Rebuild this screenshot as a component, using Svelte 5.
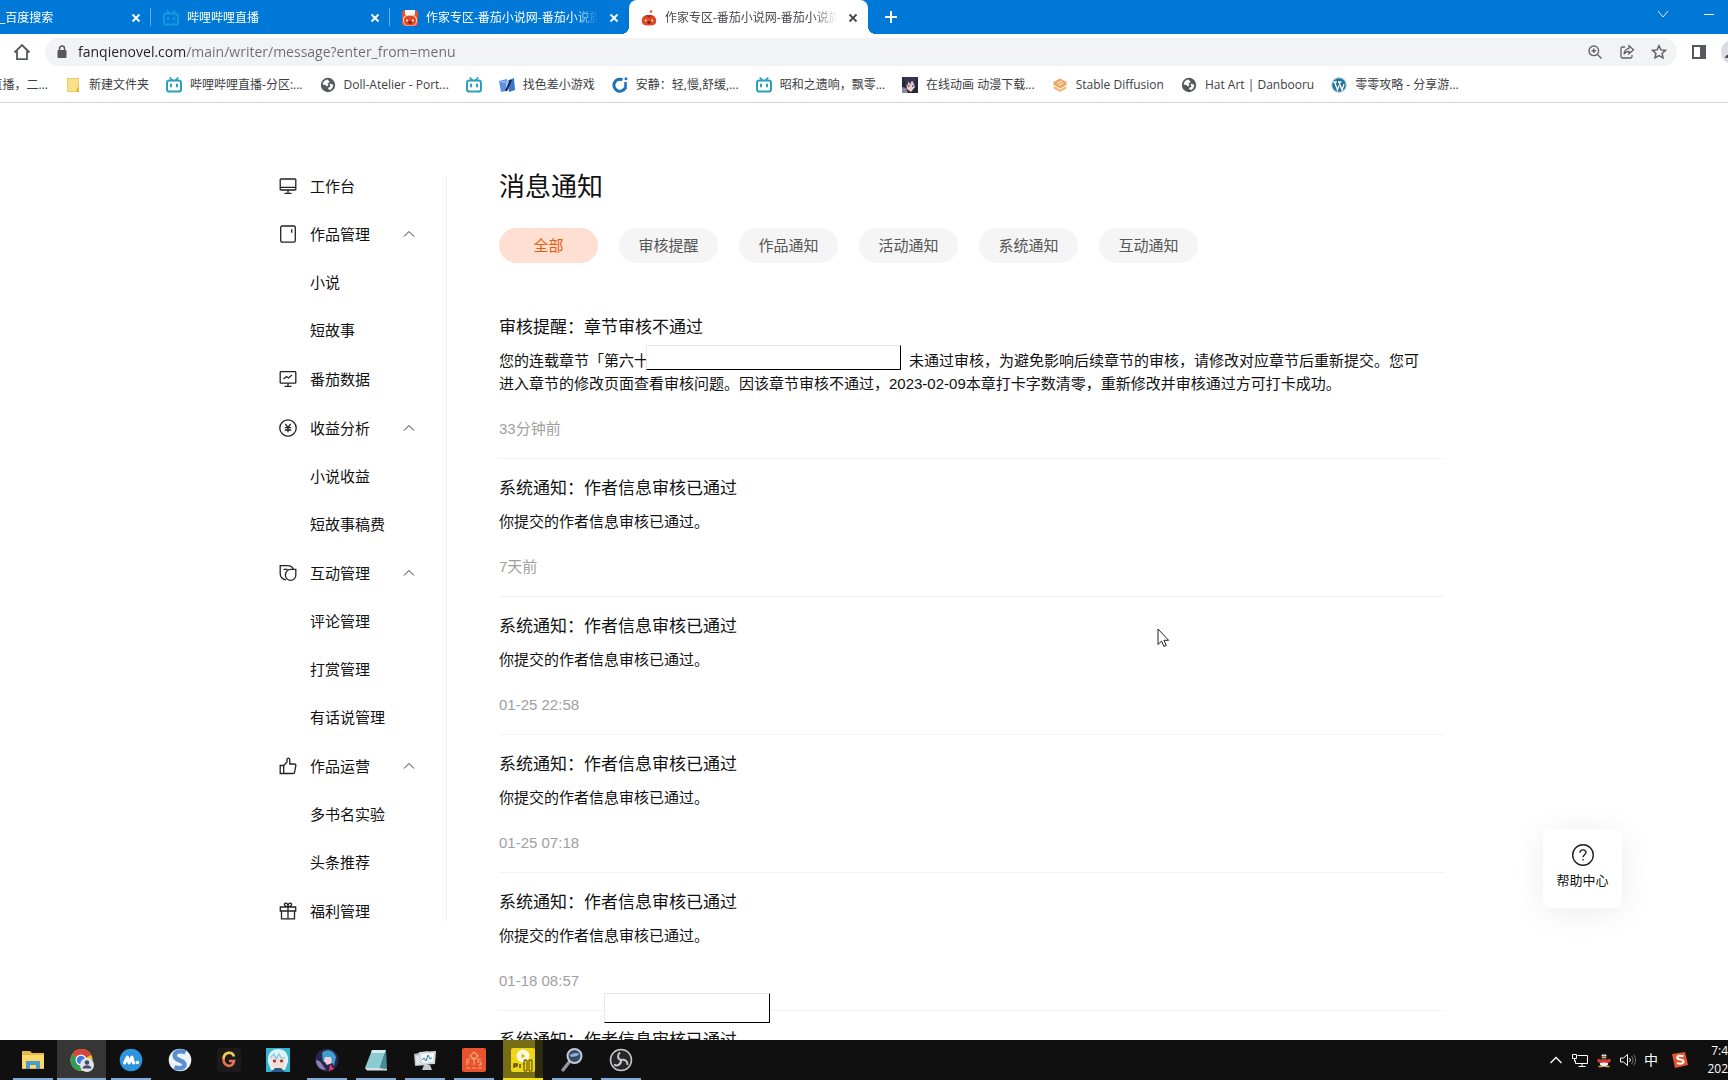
<script>
  const tabs = [
    { title: '_百度搜索', first: true },
    { title: '哔哩哔哩直播', icon: 'bili' },
    { title: '作家专区-番茄小说网-番茄小说旗', icon: 'tomatoBox' },
    { title: '作家专区-番茄小说网-番茄小说旗', icon: 'tomato', active: true }
  ];

  const bookmarks = [
    { title: '直播，二...', cut: true },
    { title: '新建文件夹', icon: 'folder' },
    { title: '哔哩哔哩直播-分区:...', icon: 'bili' },
    { title: 'Doll-Atelier - Port...', icon: 'globe' },
    { title: '', icon: 'bili' },
    { title: '找色差小游戏', icon: 'game' },
    { title: '安静：轻,慢,舒缓,...', icon: 'ring' },
    { title: '昭和之遗响，飘零...', icon: 'bili' },
    { title: '在线动画 动漫下载...', icon: 'anime' },
    { title: 'Stable Diffusion', icon: 'layers' },
    { title: 'Hat Art | Danbooru', icon: 'globe' },
    { title: '零零攻略 - 分享游...', icon: 'wordpress' }
  ];

  const menu = [
    { title: '工作台', icon: 'desk' },
    { title: '作品管理', icon: 'book', children: ['小说', '短故事'] },
    { title: '番茄数据', icon: 'chart' },
    { title: '收益分析', icon: 'yen', children: ['小说收益', '短故事稿费'] },
    { title: '互动管理', icon: 'chat', children: ['评论管理', '打赏管理', '有话说管理'] },
    { title: '作品运营', icon: 'thumb', children: ['多书名实验', '头条推荐'] },
    { title: '福利管理', icon: 'gift' }
  ];

  const filters = ['全部', '审核提醒', '作品通知', '活动通知', '系统通知', '互动通知'];
  let current = $state('全部');

  const passed = { title: '系统通知：作者信息审核已通过', text: '你提交的作者信息审核已通过。' };
  const messages = [
    { ...passed, time: '7天前' },
    { ...passed, time: '01-25 22:58' },
    { ...passed, time: '01-25 07:18' },
    { ...passed, time: '01-18 08:57' },
    { title: passed.title }
  ];

  const apps = [
    { name: 'explorer', open: true },
    { name: 'chrome', open: true, focus: true },
    { name: 'maxthon', open: true },
    { name: 'sogou' },
    { name: 'g' },
    { name: 'girl' },
    { name: 'blue', open: true },
    { name: 'notepad', open: true },
    { name: 'monitor', open: true },
    { name: 'fts', open: true },
    { name: 'potplayer', open: true, alert: true },
    { name: 'magnifier', open: true },
    { name: 'obs', open: true }
  ];
</script>

{#snippet favicon(name)}
  <svg class="fav" viewBox="0 0 16 16" width="16" height="16" aria-hidden="true">
    {#if name === 'bili'}
      <path d="M4.3 1l2 2.4M11.7 1l-2 2.4" fill="none" stroke="currentColor" stroke-width="1.7" stroke-linecap="round" />
      <rect x="1" y="3.6" width="14" height="11" rx="2.4" fill="none" stroke="currentColor" stroke-width="2" />
      <path d="M5 7.6v2M11 7.6v2" stroke="currentColor" stroke-width="2" stroke-linecap="round" />
    {:else if name === 'tomatoBox'}
      <rect width="16" height="16" rx="3" fill="#e9542e" />
      <path d="M3 0h10v4.500L8 6 3 4.500z" fill="#fff" />
      <path d="M1 10c0-4 3-5.500 7-5.500s7 1.500 7 5.500c0 5-3 6-7 6s-7-1-7-6z" fill="#f9d9cc" />
      <path d="M2 10.500C2 7 4 5.800 8 5.800s6 1.200 6 4.700c0 4-2 5-6 5s-6-1-6-5z" fill="#df4a25" />
      <circle cx="5" cy="10.500" r="1" fill="#fff" /><circle cx="11" cy="10.500" r="1" fill="#fff" />
      <ellipse cx="8" cy="12.500" rx="1.700" ry="1.300" fill="#7d1c10" />
    {:else if name === 'tomato'}
      <path d="M8 5.200C12.800 4.600 15.500 7.500 15.200 11.300C15 14.500 13.200 15.600 8 15.600S1 14.500.8 11.300C.5 7.500 3.200 4.600 8 5.200z" fill="#df4a25" />
      <path d="M4 6.500l3-1.800 1 1 1-1 3 1.800-2.500.1L8 8 6.500 6.600z" fill="#a62a17" />
      <circle cx="10" cy="1.500" r="1.200" fill="#df4a25" />
      <circle cx="4.800" cy="10.500" r=".9" fill="#fff" /><circle cx="11.200" cy="10.500" r=".9" fill="#fff" />
      <ellipse cx="8" cy="12.500" rx="1.700" ry="1.300" fill="#7d1c10" />
    {:else if name === 'folder'}
      <path d="M2 1h12v14H2z" fill="#fbe08a" /><path d="M2.500 1.500h11v13h-11z" fill="none" stroke="#eecb60" /><path d="M12 10.500h2V15h-3z" fill="#e2b944" />
    {:else if name === 'globe'}
      <circle cx="8" cy="8" r="7.200" fill="#55585c" />
      <path d="M7.500 2.600C5 3 3 4.800 2.600 7.400l2.600.5 1.600 1.500L8.500 8 7.400 6.600 9.800 5zM9.500 6.500l3.800 1.200c0 2.600-1.600 4.700-4 5.400l-1.600-2 2.700-1.400z" fill="#fff" />
    {:else if name === 'game'}
      <path d="M0 4l8-2-1 12-5 1z" fill="#5d8fe4" /><path d="M8 4l7-3 1 12-6 2z" fill="#3c73cc" />
      <path d="M12 3L7 14" stroke="#17223c" stroke-width="2" /><path d="M2 4.500l8 1" stroke="#9fc0f4" stroke-width="1.500" />
    {:else if name === 'ring'}
      <path d="M10.500 2.800A6 6 0 1 0 13.200 11" fill="none" stroke="#1d74b8" stroke-width="3" /><path d="M13.500 5v7" stroke="#1d74b8" stroke-width="2.600" /><circle cx="14" cy="1.700" r="1.500" fill="#1d74b8" />
    {:else if name === 'anime'}
      <path d="M0 0h16v16H0z" fill="#28263f" /><path d="M4 5l7-1 2 6-4 5-4-3z" fill="#e9cfc6" /><path d="M1 0l4 9 2-5 1 4 2-5 3 6 2-9z" fill="#363455" />
      <path d="M0 10l4 1 2 5H0z" fill="#8d8a9c" /><path d="M6 9h1.500M10 9h1.500" stroke="#4b4399" stroke-width="1.500" />
    {:else if name === 'layers'}
      <path d="M1.500 5L8 1.500 14.500 5v3L8 11.500 1.500 8z" fill="#eda75c" /><path d="M1.500 9L8 12.500 14.500 9v2.500L8 15l-6.500-3.500z" fill="#f1b878" /><path d="M5 6.500l5-2.500M6.500 8.500l5-2.500" stroke="#fff" />
    {:else if name === 'wordpress'}
      <circle cx="8" cy="8" r="7.800" fill="#a9cfe0" /><circle cx="8" cy="8" r="6.700" fill="#21759b" />
      <path d="M2.400 5h3.400M3.500 5l3 8L8 8.500M7 5h3.400M8 5l3 8 2-6" fill="none" stroke="#fff" stroke-width="1.300" />
    {/if}
  </svg>
{/snippet}

{#snippet menuIcon(name)}
  <svg class="menu-icon" viewBox="0 0 18 18" width="18" height="18" aria-hidden="true">
    {#if name === 'desk'}
      <path d="M2 2h14a.8.8 0 0 1 .8.8v9.400a.8.8 0 0 1-.8.8H2a.8.8 0 0 1-.8-.8V2.800A.8.8 0 0 1 2 2zM1.200 10.300h15.600M9 13v3M5.500 16.300h7" />
    {:else if name === 'book'}
      <rect x="1.700" y="1" width="14.600" height="16.200" rx="1.600" /><path d="M12.700 4.300v3.500" />
    {:else if name === 'chart'}
      <rect x="1.200" y="1.600" width="15.600" height="11.600" rx=".8" /><path d="M9 13.200v3M5.500 16.300h7M4.500 9l3-2.500 2 1.500 3.500-3" />
    {:else if name === 'yen'}
      <circle cx="9" cy="9" r="8.200" /><path d="M6.300 5L9 8.300 11.700 5M9 8.300v5M5.800 8.600h6.400M5.800 11h6.400" />
    {:else if name === 'chat'}
      <path d="M7 15.800C3.500 15.300 1.200 13 1.200 9.500V1.700h7.300c3.200 0 5 1.300 5.800 3.600" />
      <path d="M16.800 5.300v5.900a5.200 5.200 0 1 1-10.400 0c0-3.700 2.500-5.900 5.600-5.900zM4.500 5.300h4" />
    {:else if name === 'thumb'}
      <path d="M1.200 8.500h3.500v8H1.200zM4.700 8.500L8 5V2.500C8 .6 10.800.8 10.800 3v4h4.600c1 0 1.600.8 1.400 1.700l-1.200 6.500c-.1.800-.7 1.300-1.500 1.300H4.700" />
    {:else if name === 'gift'}
      <path d="M1.300 5h15.400v4H1.300zM2.500 9h13v7.800h-13zM9 5v11.800M9 5C5 5 4.500 1.200 6.600 1.200 8 1.200 9 3 9 5c0-2 1-3.800 2.400-3.800C13.500 1.200 13 5 9 5z" />
    {/if}
  </svg>
{/snippet}

{#snippet appIcon(name)}
  <svg viewBox="0 0 24 24" width="24" height="24" aria-hidden="true">
    {#if name === 'explorer'}
      <path d="M1 3h8l2 2h12v16H1z" fill="#e9b84a" /><path d="M1 7h22v13H1z" fill="#fbd96b" /><path d="M5 13h14v8h-4v-4H9v4H5z" fill="#4a9bd1" />
    {:else if name === 'chrome'}
      <circle cx="11.500" cy="12" r="11" fill="#f1c232" /><path d="M11.500 12L2 6.400a11 11 0 0 1 19.200.6z" fill="#d9453a" /><path d="M11.500 12L2 6.400A11 11 0 0 0 11 23z" fill="#2f9e54" />
      <circle cx="11" cy="12" r="5.500" fill="#fff" /><circle cx="11" cy="12" r="4.300" fill="#4079e0" />
      <circle cx="17" cy="17" r="7" fill="#dfe3ee" /><circle cx="17" cy="14.500" r="2.300" fill="#474d5e" /><path d="M12.500 20.500c0-4.500 9-4.500 9 0z" fill="#474d5e" />
    {:else if name === 'maxthon'}
      <circle cx="12" cy="12" r="11.300" fill="#2c95dd" /><path d="M5.500 15l3-6 1.500 6 3-6 1.500 6" fill="none" stroke="#fff" stroke-width="3" stroke-linejoin="round" stroke-linecap="round" /><circle cx="18.300" cy="14.500" r="1.800" fill="#fff" />
    {:else if name === 'sogou'}
      <circle cx="12" cy="12" r="11.300" fill="#eef3fb" /><path d="M17.500 4.500C12 1.500 5.500 4 7 9c1.200 3.800 9.500 3 9.500 7.500 0 3.500-5 5-10 2.500" fill="none" stroke="#5a8fd2" stroke-width="4.500" />
    {:else if name === 'g'}
      <rect width="24" height="24" rx="3" fill="#1c1a1a" /><path d="M17 8.500C15.500 3 7 3.500 6.500 11" fill="none" stroke="#f3c95a" stroke-width="2.600" /><path d="M6.500 10.500c-.5 8.500 9.500 10 10.500 2.500h-5" fill="none" stroke="#ea7550" stroke-width="2.600" />
    {:else if name === 'girl'}
      <path d="M0 0h24v24H0z" fill="#35b3cf" /><path d="M2 14C1 4 7 1 12 1s11 3 10 13l-3 8H5z" fill="#dff2f8" /><path d="M5 10l5-2 4 1 5 2-1 8-6 3-6-3z" fill="#f6dcd5" /><path d="M7 13h3M14 13h3" stroke="#a43a40" stroke-width="2.400" /><path d="M4 10l4-4 2 5 3-5 3 5 3-2" fill="none" stroke="#8ecfe2" stroke-width="1.500" /><path d="M5 24l4-4h6l4 4z" fill="#275a8a" />
    {:else if name === 'blue'}
      <circle cx="12" cy="12" r="11.500" fill="#25254d" /><path d="M7 5c4-5 12-3 14 4l-2 9-5-8-6 4z" fill="#3d9ed0" /><path d="M10 9l6 0 1 6-5 2-3-4z" fill="#efd2d8" /><path d="M1 12c4 0 6 4 10 10C5 22 1 18 1 12z" fill="#8b80b4" /><path d="M15 16l4 5-5 2z" fill="#de3b62" />
    {:else if name === 'notepad'}
      <path d="M8 2h14l-6 18H1z" fill="#8ccbd2" /><path d="M8 2h14l-1 3H7z" fill="#dcebee" /><path d="M22 2l1 19-7-1z" fill="#4a8d9a" /><path d="M1 20h15l7 1v1.500H3z" fill="#d6dfe1" />
    {:else if name === 'monitor'}
      <path d="M1 6l14-3v14l-13 1z" fill="#b9bec4" /><path d="M2.500 8L12 6v10l-9 1z" fill="#dfe4e8" />
      <path d="M6 4l17-1-1 13-15 1z" fill="#d3d8dd" /><path d="M8 6l13-1-1 9-11 1z" fill="#f6fafc" />
      <path d="M9 12l2-2 2 3 2-6 2 4 2-1" fill="none" stroke="#2d7cb8" /><path d="M11 17h6l2 5H9z" fill="#c7cbd0" />
    {:else if name === 'fts'}
      <rect width="24" height="24" rx="2" fill="#e9532b" /><path d="M12 4l4 4-4 3-4-3zM5 11v6M5 11h3M5 14h3M9.500 11h5M12 11v6M19 11h-3v3h3v3h-3M4 20h4M10 20h4M16 20h4" fill="none" stroke="#f8a57c" stroke-width="1.200" />
    {:else if name === 'potplayer'}
      <rect width="24" height="24" rx="2" fill="#f0d716" /><circle cx="12" cy="8" r="6.500" fill="#fffbe0" /><path d="M10.500 5.500l4 2.500-4 2.500z" fill="#d8b90c" /><path d="M3 20v-4h3v2H3M9 16v4M12 16h3" fill="none" stroke="#5a4d06" stroke-width="1.500" /><path d="M13 12h3v11h-3zM18 12h3v11h-3z" fill="#e5cd18" stroke="#5a4d06" />
    {:else if name === 'magnifier'}
      <path d="M10 13L3 22" stroke="#8f979f" stroke-width="3.200" stroke-linecap="round" /><circle cx="14.500" cy="8" r="7" fill="#364a66" stroke="#c2cad4" stroke-width="2" /><path d="M9.500 8c2-3 7-4 10-2-2 2-6 4-10 2z" fill="#8fb1d4" />
    {:else if name === 'obs'}
      <circle cx="12" cy="12" r="10.500" fill="#26262a" stroke="#c9c9c9" stroke-width="1.500" />
      <path d="M11 4.500C8 7 8.500 11 12 12M12 12c4-1 7 1.500 6.500 5M12 12c.5 4-3.500 7-7 4.500" fill="none" stroke="#c9c9c9" stroke-width="2" />
    {/if}
  </svg>
{/snippet}

{#snippet cross()}
  <svg viewBox="0 0 16 16" width="16" height="16" aria-hidden="true"><path d="M4.500 4.500l7 7M11.500 4.500l-7 7" stroke="currentColor" stroke-width="1.800" /></svg>
{/snippet}

<div class="screen">
  <header class="browser">
    <div class="tabstrip">
      {#each tabs as tab}
        <div class="tab" class:first={tab.first} class:active={tab.active}>
          {#if tab.icon}{@render favicon(tab.icon)}{/if}
          <span class="tab-title">{tab.title}</span>
          <button class="plain" aria-label="关闭">{@render cross()}</button>
        </div>
      {/each}
      <button class="plain new-tab" aria-label="新标签页">
        <svg viewBox="0 0 24 24" width="24" height="24"><path d="M12 6v12M6 12h12" stroke="#fff" stroke-width="2" /></svg>
      </button>
      <div class="window-buttons">
        <button class="plain" aria-label="搜索标签页"><svg viewBox="0 0 16 16" width="16" height="16"><path d="M3 5l5 6 5-6" fill="none" stroke="#d8ecfb" /></svg></button>
        <button class="plain" aria-label="最小化"><svg viewBox="0 0 16 16" width="16" height="16"><path d="M3 8.500h10" stroke="#fff" /></svg></button>
      </div>
    </div>

    <div class="toolbar">
      <button class="plain home" aria-label="主页">
        <svg viewBox="0 0 18 18" width="18" height="18"><path d="M1.500 9.500L9 2l7.500 7.500M4 8v8.200h10V8" fill="none" stroke="#55585c" stroke-width="1.800" /></svg>
      </button>
      <div class="omnibox">
        <svg viewBox="0 0 12 14" width="12" height="14" aria-hidden="true"><rect x="1.500" y="5" width="9" height="8" rx="1" fill="#55585c" /><path d="M3.500 6V3.500a2.500 2.500 0 0 1 5 0V6" fill="none" stroke="#55585c" stroke-width="1.500" /></svg>
        <input aria-label="地址" value="fanqienovel.com/main/writer/message?enter_from=menu" />
        <button class="plain" aria-label="缩放"><svg viewBox="0 0 16 16" width="16" height="16" fill="none" stroke="#5f6368" stroke-width="1.400"><circle cx="6.800" cy="6.800" r="4.800" /><path d="M10.500 10.500l4 4M4.500 6.800h4.600M6.800 4.500v4.600" /></svg></button>
        <button class="plain" aria-label="分享"><svg viewBox="0 0 16 16" width="16" height="16" fill="none" stroke="#5f6368" stroke-width="1.300"><path d="M6 3H3.500A1.500 1.500 0 0 0 2 4.500v8A1.500 1.500 0 0 0 3.500 14h8a1.500 1.500 0 0 0 1.500-1.500V11" /><path d="M10 1.800l4.500 4-4.500 4V7.500c-2.500 0-4 .8-5 2.800.3-3.500 2-5.600 5-6z" /></svg></button>
        <button class="plain" aria-label="加入书签"><svg viewBox="0 0 16 16" width="16" height="16" fill="none" stroke="#5f6368" stroke-width="1.500"><path d="M8 1.800l1.900 4.100 4.500.5-3.300 3 .9 4.400L8 11.600l-4 2.200.9-4.400-3.300-3 4.500-.5z" /></svg></button>
      </div>
      <button class="plain" aria-label="侧边栏"><svg viewBox="0 0 16 16" width="16" height="16"><path d="M1 1h14v14H1z" fill="#55585c" /><path d="M3 3h6v10H3z" fill="#fff" /></svg></button>
      <button class="plain profile" aria-label="个人资料"><svg viewBox="0 0 24 24" width="24" height="24"><circle cx="12" cy="12" r="12" fill="#dadce3" /><circle cx="12" cy="9" r="3.500" fill="#474d5e" /><path d="M4 18c0-6 16-6 16 0z" fill="#474d5e" /></svg></button>
    </div>

    <nav class="bookmarks" aria-label="书签">
      {#each bookmarks as mark}
        <a href="#bookmark" class:cut={mark.cut} aria-label={mark.title || '哔哩哔哩'}>
          {#if mark.icon}{@render favicon(mark.icon)}{/if}
          {#if mark.title}<span>{mark.title}</span>{/if}
        </a>
      {/each}
    </nav>
  </header>

  <div class="page">
    <div class="container">
      <aside>
        <ul class="menu">
          {#each menu as group}
            <li class="group">
              <a href="#menu" class="item">
                {@render menuIcon(group.icon)}
                <span>{group.title}</span>
                {#if group.children}
                  <svg class="arrow" viewBox="0 0 12 8" width="12" height="8" aria-hidden="true"><path d="M1 6.500L6 1.500l5 5" /></svg>
                {/if}
              </a>
              {#if group.children}
                <ul>
                  {#each group.children as child}
                    <li><a href="#menu" class="item child">{child}</a></li>
                  {/each}
                </ul>
              {/if}
            </li>
          {/each}
        </ul>
      </aside>

      <main>
        <h1>消息通知</h1>
        <div class="filters">
          {#each filters as filter}
            <button class:selected={filter === current} onclick={() => (current = filter)}>{filter}</button>
          {/each}
        </div>

        <article>
          <h2>审核提醒：章节审核不通过</h2>
          <p>您的连载章节「第六十<span class="mask"></span>未通过审核，为避免影响后续章节的审核，请修改对应章节后重新提交。您可<br />进入章节的修改页面查看审核问题。因该章节审核不通过，2023-02-09本章打卡字数清零，重新修改并审核通过方可打卡成功。</p>
          <time>33分钟前</time>
        </article>
        {#each messages as message}
          <article>
            <h2>{message.title}</h2>
            {#if message.text}<p>{message.text}</p>{/if}
            {#if message.time}<time>{message.time}</time>{/if}
          </article>
        {/each}
      </main>
    </div>
  </div>

  <footer class="taskbar">
    {#each apps as app}
      <button class="app" class:open={app.open} class:focus={app.focus} class:alert={app.alert} aria-label={app.name}>
        {@render appIcon(app.name)}
      </button>
    {/each}
    <div class="tray">
      <svg viewBox="0 0 16 16" width="16" height="16"><path d="M2.500 11L8 5.500l5.500 5.500" fill="none" stroke="#fff" stroke-width="1.300" /></svg>
      <svg viewBox="0 0 16 16" width="16" height="16" fill="none" stroke="#fff"><path d="M5.500 3.500h10v8h-12v-3M10 11.500v3M6.500 14.500h7M.5 2.500h4v4h-4zM2.500 6.500v3" /></svg>
      <svg viewBox="0 0 16 16" width="16" height="16"><ellipse cx="8" cy="9" rx="5" ry="5.500" fill="#151515" /><ellipse cx="8" cy="11" rx="4.200" ry="3.700" fill="#f3f1ee" /><circle cx="8" cy="4.500" r="3.300" fill="#2a2a2a" /><path d="M2 6.500c4 2 8 2 12 0l1 3-3 1.500-4-.5-4 .5-3-1.500z" fill="#d93838" /><circle cx="6.800" cy="3.500" r="1.100" fill="#fff" /><circle cx="9.200" cy="3.500" r="1.100" fill="#fff" /><path d="M6 5.500h4M2.500 14.500h4M9.500 14.500h4" stroke="#eea63c" stroke-width="1.500" /></svg>
      <svg viewBox="0 0 16 16" width="16" height="16" fill="none" stroke="#fff"><path d="M.5 6h3l4-3.500v11L3.500 10h-3zM9.500 6c1 1.200 1 2.800 0 4" /><path d="M11.500 4c2 2.300 2 5.700 0 8M13.500 2.500c2.700 3.300 2.700 7.700 0 11" stroke="#777" /></svg>
      <span class="ime">中</span>
      <svg class="sogou" viewBox="0 0 16 16" width="16" height="16"><path d="M0 2l13-2 3 13-13 3z" fill="#e2562d" /><path d="M11.500 4.300C8.500 3 5 3.800 5.300 6c.3 2 6 1 6.200 3.300.2 2.200-3.500 3-6.500 1.700" fill="none" stroke="#fff" stroke-width="2" /></svg>
      <div class="clock"><span>7:4</span><span>202</span></div>
    </div>
  </footer>

  <a class="help" href="#help">
    <svg viewBox="0 0 24 24" width="24" height="24" fill="none" stroke="#222" stroke-width="1.400" aria-hidden="true"><circle cx="12" cy="12" r="10.300" /><path d="M9 9.800c0-4 6-3.800 6-.3 0 2.100-3 2.300-3 4.700" /><path d="M12 16v1.500" /></svg>
    <span>帮助中心</span>
  </a>
  <div class="mask floating"></div>
  <svg class="cursor" viewBox="0 0 13 20" width="13" height="20" aria-hidden="true"><path d="M1 1v15.500l3.600-3.400 2.300 5.400 2.400-1-2.300-5.200h4.600z" fill="#fff" stroke="#222" /></svg>
</div>

<style>
  :global(body) {
    margin: 0;
    background: #fff;
  }

  .screen {
    --ui: "Open Sans", "Noto Sans CJK SC", sans-serif;
    position: relative;
    display: flex;
    flex-direction: column;
    height: 100vh;
    overflow: hidden;
    font: 15px/23px "Liberation Sans", "Noto Sans CJK SC", sans-serif;
    color: #111;
  }

  svg {
    display: block;
    flex: none;
  }

  a {
    color: inherit;
    text-decoration: none;
  }

  ul {
    list-style: none;
    margin: 0;
    padding: 0;
  }

  .plain {
    flex: none;
    padding: 0;
    border: 0;
    background: none;
    color: inherit;
  }

  /* browser */
  .browser {
    flex: none;
    font: 12px/16px var(--ui);
    border-bottom: 1px solid #d4d6d9;
  }

  .tabstrip {
    display: flex;
    align-items: center;
    height: 34px;
    background: #0078d7;
    color: #fff;
  }

  .tab {
    position: relative;
    box-sizing: border-box;
    flex: none;
    display: flex;
    align-items: center;
    gap: 8px;
    width: 239px;
    height: 34px;
    padding: 1px 7px 0 12px;
  }

  .tab.first {
    width: 151px;
    padding-left: 0;
  }

  .tab:not(.active)::after {
    content: "";
    position: absolute;
    right: 0;
    top: 8px;
    height: 18px;
    border-right: 1px solid #69b0e8;
  }

  .tab:nth-child(3)::after {
    display: none;
  }

  .tab.active {
    background: #fff;
    color: #45484c;
    border-radius: 8px 8px 0 0;
  }

  .tab.active::before,
  .tab.active::after {
    content: "";
    position: absolute;
    bottom: 0;
    left: -8px;
    width: 8px;
    height: 8px;
    background: radial-gradient(circle at 0 0, transparent 8px, #fff 8px);
  }

  .tab.active::after {
    left: auto;
    right: -8px;
    background: radial-gradient(circle at 8px 0, transparent 8px, #fff 8px);
  }

  .tab-title {
    flex: 1;
    min-width: 0;
    padding-top: 1px;
    overflow: hidden;
    white-space: nowrap;
    mask-image: linear-gradient(to left, transparent, #000 24px);
  }

  .tab .fav {
    color: #109ae0;
  }

  .new-tab {
    margin-left: 11px;
  }

  .window-buttons {
    display: flex;
    gap: 30px;
    margin: 0 11px 6px auto;
  }

  .toolbar {
    display: flex;
    align-items: center;
    gap: 14px;
    height: 36px;
    margin-right: -17px;
    padding-left: 13px;
  }

  .omnibox {
    flex: 1;
    display: flex;
    align-items: center;
    gap: 16px;
    height: 28px;
    padding: 0 10px 0 11px;
    border-radius: 14px;
    background: #f1f3f4;
  }

  .omnibox input {
    flex: 1;
    min-width: 0;
    margin-left: -6px;
    padding: 0;
    border: 0;
    outline: 0;
    font: 14px/20px var(--ui);
    color: transparent;
    background: linear-gradient(to right, #202124 108px, #6a6e73 108px);
    background-clip: text;
  }

  .bookmarks {
    display: flex;
    align-items: center;
    gap: 17px;
    height: 30px;
    padding-bottom: 2px;
    color: #3c4043;
    white-space: nowrap;
  }

  .bookmarks a {
    display: flex;
    align-items: center;
    gap: 8px;
  }

  .bookmarks a.cut {
    justify-content: flex-end;
    width: 48px;
  }

  .bookmarks .fav {
    color: #2ba0bb;
  }

  /* page */
  .page {
    flex: 1;
    min-height: 0;
    overflow: hidden;
    padding-top: 59px;
  }

  .container {
    display: grid;
    grid-template-columns: 168px 1fr;
    gap: 52px;
    align-items: start;
    max-width: 1170px;
    margin: 0 auto;
  }

  aside {
    position: relative;
  }

  aside::after {
    content: "";
    position: absolute;
    top: 14px;
    right: 0;
    bottom: 13px;
    border-right: 1px solid #f0f0f0;
  }

  .group:nth-child(n + 3) {
    margin-top: 1px;
  }

  .item {
    display: flex;
    align-items: center;
    gap: 13px;
    height: 48px;
    padding-right: 32px;
  }

  .item.child {
    padding-left: 31px;
  }

  .menu-icon {
    fill: none;
    stroke: #222;
    stroke-width: 1.3;
  }

  .arrow {
    margin-left: auto;
    fill: none;
    stroke: #333;
  }

  main {
    padding-right: 5px;
  }

  h1 {
    margin: 0 0 16px;
    font-size: 26px;
    line-height: 50px;
    font-weight: 400;
  }

  .filters {
    display: flex;
    gap: 21px;
    margin-bottom: 35px;
  }

  .filters button {
    width: 99px;
    height: 35px;
    padding: 0;
    border: 0;
    border-radius: 18px;
    background: #f5f5f5;
    color: #555;
    font: inherit;
  }

  .filters button.selected {
    background: #ffdfd1;
    color: #e8590c;
  }

  article {
    padding: 18px 0 19px;
    border-bottom: 1px solid #f2f2f2;
  }

  h2 {
    margin: 0 0 9px;
    font-size: 17px;
    line-height: 24px;
    font-weight: 400;
  }

  p {
    margin: 0 0 24px;
    white-space: nowrap;
  }

  time {
    display: block;
    line-height: 20px;
    color: #a0a0a0;
  }

  .mask {
    display: inline-block;
    box-sizing: border-box;
    width: 255px;
    height: 25px;
    margin: -4px 8px -4px -3px;
    background: #fff;
    border: 1px solid #e8e8e8;
    border-right-color: #000;
    border-bottom-color: #000;
  }

  .mask.floating {
    position: absolute;
    left: 604px;
    bottom: 57px;
    width: 166px;
    height: 30px;
    margin: 0;
  }

  .help {
    position: absolute;
    right: 106px;
    bottom: 172px;
    box-sizing: border-box;
    display: flex;
    flex-direction: column;
    align-items: center;
    gap: 4px;
    width: 79px;
    height: 79px;
    padding-top: 14px;
    border-radius: 8px;
    background: #fff;
    box-shadow: 0 4px 32px rgba(0, 0, 0, 0.08);
    font-size: 13px;
    line-height: 20px;
  }

  .cursor {
    position: absolute;
    left: 1157px;
    top: 628px;
  }

  /* taskbar */
  .taskbar {
    flex: none;
    display: flex;
    height: 40px;
    padding-left: 8px;
    background: #101010;
    color: #fff;
    font: 12px/18px var(--ui);
  }

  .app {
    position: relative;
    display: flex;
    align-items: center;
    justify-content: center;
    width: 49px;
    padding: 0;
    border: 0;
    background: none;
  }

  .app.open::after {
    content: "";
    position: absolute;
    left: 5px;
    right: 4px;
    bottom: 0;
    height: 2px;
    background: #82add9;
  }

  .app.focus {
    background: #363636;
  }

  .app.focus::after {
    left: 0;
    right: 0;
  }

  .app.alert {
    background: linear-gradient(to right, transparent 5px, #766d17 5px, #766d17 37px, #2e2b10 37px, #2e2b10 45px, transparent 45px);
  }

  .app.alert::after {
    background: #f3df1c;
  }

  .tray {
    display: flex;
    align-items: center;
    gap: 8px;
    margin-left: auto;
  }

  .ime {
    font-size: 14px;
  }

  .sogou {
    margin: 0 12px 0 6px;
  }

  .clock {
    display: flex;
    flex-direction: column;
    align-items: flex-end;
    width: 20px;
  }
</style>
